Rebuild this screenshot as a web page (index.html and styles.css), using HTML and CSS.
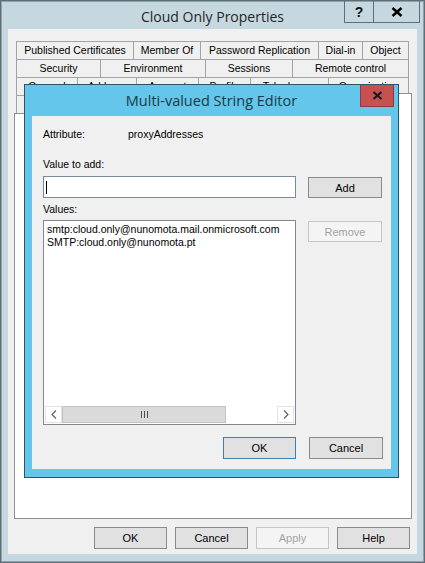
FILE: index.html
```html
<!DOCTYPE html>
<html>
<head>
<meta charset="utf-8">
<title>Cloud Only Properties</title>
<link rel="stylesheet" href="styles.css">
</head>
<body>
<div class="window">
  <div class="titlebar">
    <div class="title">Cloud Only Properties</div>
    <div class="caption-btns">
      <div class="cbtn help">?</div>
      <div class="cbtn close">
        <svg width="12" height="10" viewBox="0 0 12 10"><path d="M1.5 1 L10.5 9 M10.5 1 L1.5 9" stroke="#000" stroke-width="2.4" fill="none"/></svg>
      </div>
    </div>
  </div>
  <div class="client">
    <div class="tabs">
      <div class="tabrow r1">
        <div class="tab">Published Certificates</div>
        <div class="tab">Member Of</div>
        <div class="tab">Password Replication</div>
        <div class="tab">Dial-in</div>
        <div class="tab last">Object</div>
      </div>
      <div class="tabrow r2">
        <div class="tab">Security</div>
        <div class="tab">Environment</div>
        <div class="tab">Sessions</div>
        <div class="tab last">Remote control</div>
      </div>
      <div class="tabrow r3">
        <div class="tab">General</div>
        <div class="tab">Address</div>
        <div class="tab">Account</div>
        <div class="tab">Profile</div>
        <div class="tab">Telephones</div>
        <div class="tab last">Organization</div>
      </div>
      <div class="tabrow r4">
        <div class="tab">COM+</div>
        <div class="tab last sel">Attribute Editor</div>
      </div>
    </div>
    <div class="panel"></div>
    <div class="buttons">
      <div class="btn">OK</div>
      <div class="btn">Cancel</div>
      <div class="btn disabled">Apply</div>
      <div class="btn">Help</div>
    </div>
  </div>

  <div class="dialog">
    <div class="dlg-titlebar">
      <div class="dlg-title">Multi-valued String Editor</div>
      <div class="dlg-close">
        <svg width="11" height="9" viewBox="0 0 11 9"><path d="M1.5 1 L9.5 8 M9.5 1 L1.5 8" stroke="#1a1a1a" stroke-width="2.2" fill="none"/></svg>
      </div>
    </div>
    <div class="dlg-client">
      <div class="attr-row"><span class="attr-label">Attribute:</span><span>proxyAddresses</span></div>
      <div class="label l-value">Value to add:</div>
      <div class="field-row">
        <div class="textbox"><span class="caret"></span></div>
        <div class="btn add">Add</div>
      </div>
      <div class="label l-values">Values:</div>
      <div class="field-row list-row">
        <div class="listbox">
          <div class="items">
            <div class="item">smtp:cloud.only@nunomota.mail.onmicrosoft.com</div>
            <div class="item">SMTP:cloud.only@nunomota.pt</div>
          </div>
          <div class="hscroll">
            <div class="sb-arrow">
              <svg width="6" height="9" viewBox="0 0 6 9"><path d="M5 0.5 L1 4.5 L5 8.5" stroke="#606060" stroke-width="1.2" fill="none"/></svg>
            </div>
            <div class="sb-thumb"><span class="grip"></span><span class="grip"></span><span class="grip"></span></div>
            <div class="sb-track"></div>
            <div class="sb-arrow">
              <svg width="6" height="9" viewBox="0 0 6 9"><path d="M1 0.5 L5 4.5 L1 8.5" stroke="#606060" stroke-width="1.2" fill="none"/></svg>
            </div>
          </div>
        </div>
        <div class="btn disabled remove">Remove</div>
      </div>
      <div class="dlg-footer">
        <div class="btn default ok">OK</div>
        <div class="btn cancel">Cancel</div>
      </div>
    </div>
  </div>
</div>
</body>
</html>
```
FILE: styles.css
```css
* { box-sizing: border-box; }
html, body { margin: 0; padding: 0; }
body {
  font-family: "Liberation Sans", Arial, sans-serif;
  font-size: 10.5px;
  color: #000;
  background: #c5d8df;
}

.window {
  position: relative;
  width: 425px;
  height: 563px;
  border: 1px solid #5f6e77;
  box-shadow: inset 0 0 0 1px #8fa2ab;
  background: #c5d8df;
  display: flex;
  flex-direction: column;
}

.titlebar {
  height: 28px;
  flex: none;
  display: grid;
  grid-template-columns: 1fr auto 1fr;
}
.title {
  grid-column: 2;
  align-self: center;
  padding-top: 2px;
  font-family: "Open Sans", "Noto Sans", sans-serif;
  font-size: 14px;
  color: #262626;
  white-space: nowrap;
}
.caption-btns {
  grid-column: 3;
  justify-self: end;
  align-self: start;
  display: flex;
  height: 22px;
  margin-right: 4px;
}
.cbtn {
  height: 22px;
  border-left: 1px solid #5f6e77;
  border-bottom: 1px solid #5f6e77;
  display: flex;
  align-items: center;
  justify-content: center;
}
.cbtn.help {
  width: 29px;
  font-family: "Liberation Sans", Arial, sans-serif;
  font-weight: bold;
  font-size: 14px;
  color: #111;
}
.cbtn.close {
  width: 47px;
  border-right: 1px solid #5f6e77;
}

.client {
  flex: none;
  height: 525px;
  margin: 0 7px;
  background: #f0f0f0;
  padding: 12px 5px 0 6px;
  display: flex;
  flex-direction: column;
}

.tabs {
  margin: 0 3px 0 2px;
  flex: none;
}
.tabrow {
  display: grid;
  height: 18px;
}
.r1 { grid-template-columns: 117px 67px 118px 44px 1fr; }
.r2 { grid-template-columns: 84px 105px 87px 1fr; }
.r3 { grid-template-columns: 61px 59px 62px 52px 78px 1fr; }
.r4 { grid-template-columns: 184px 1fr; }
.tab {
  border-left: 1px solid #a3a3a3;
  border-top: 1px solid #a3a3a3;
  background: #f0f0f0;
  text-align: center;
  line-height: 17px;
  white-space: nowrap;
  overflow: hidden;
}
.tab.last { border-right: 1px solid #a3a3a3; }
.tab.sel {
  background: #fff;
  margin: -2px -3px -1px -2px;
  border-color: #8e8f8f;
  position: relative;
  z-index: 1;
}

.panel {
  flex: 1;
  background: #fff;
  border: 1px solid #8e8f8f;
}

.buttons {
  flex: none;
  display: flex;
  justify-content: flex-end;
  gap: 8px;
  margin: 8px 2px 5px 0;
}
.btn {
  width: 73px;
  height: 22px;
  background: #e1e1e1;
  border: 1px solid #8a8a8a;
  display: flex;
  align-items: center;
  justify-content: center;
  font-size: 11px;
  color: #000;
}
.btn.disabled {
  background: #f4f4f4;
  border-color: #c6c6c6;
  color: #a3a3a3;
}
.btn.default {
  border-color: #3c7fb1;
}

/* ---------- dialog ---------- */
.dialog {
  position: absolute;
  left: 23px;
  top: 83px;
  width: 375px;
  height: 394px;
  border: 1px solid #2f5466;
  background: #63c6ea;
  padding: 0 7px 8px 7px;
  display: flex;
  flex-direction: column;
  z-index: 5;
}
.dlg-titlebar {
  height: 31px;
  flex: none;
  margin: 0 -7px;
  display: grid;
  grid-template-columns: 1fr auto 1fr;
}
.dlg-title {
  grid-column: 2;
  align-self: center;
  font-family: "Open Sans", "Noto Sans", sans-serif;
  font-size: 14.5px;
  color: #1d3a45;
  white-space: nowrap;
}
.dlg-close {
  grid-column: 3;
  justify-self: end;
  align-self: start;
  width: 34px;
  height: 22px;
  margin-right: 4px;
  background: #c75050;
  border: 1px solid #8c3a3a;
  border-top: none;
  display: flex;
  align-items: center;
  justify-content: center;
}
.dlg-client {
  flex: 1;
  background: #f0f0f0;
  padding: 12px 0 0 11px;
  display: flex;
  flex-direction: column;
}
.attr-row {
  height: 13px;
  line-height: 13px;
  display: flex;
}
.attr-label { width: 85px; }
.label {
  height: 13px;
  line-height: 13px;
}
.l-value { margin-top: 17px; }
.l-values { margin-top: 5px; }
.field-row {
  display: grid;
  grid-template-columns: 253px 74px;
  column-gap: 12px;
  align-items: start;
  margin-top: 5px;
}
.list-row { margin-top: 4px; }
.textbox {
  height: 22px;
  background: #fff;
  border: 1px solid #7a8a9c;
  padding: 4px 0 0 2px;
}
.caret {
  display: block;
  width: 1px;
  height: 13px;
  background: #000;
}
.btn.add { margin-top: 1px; width: 74px; height: 21px; }
.btn.remove { margin-top: 1px; width: 74px; height: 21px; }

.listbox {
  height: 205px;
  background: #fff;
  border: 1px solid #828790;
  padding: 1px;
  display: flex;
  flex-direction: column;
}
.items {
  flex: 1;
  padding: 1px 0 0 2px;
}
.item {
  height: 13px;
  line-height: 13px;
  white-space: nowrap;
}
.hscroll {
  height: 17px;
  display: flex;
  background: #fff;
}
.sb-arrow {
  width: 17px;
  height: 17px;
  border: 1px solid #e3e3e3;
  display: flex;
  align-items: center;
  justify-content: center;
  background: #fff;
}
.sb-thumb {
  width: 164px;
  height: 17px;
  background: #dadada;
  border: 1px solid #c2c2c2;
  display: flex;
  align-items: center;
  justify-content: center;
  gap: 2px;
}
.grip {
  width: 1px;
  height: 7px;
  background: #505050;
}
.sb-track {
  flex: 1;
  background: #fff;
}

.dlg-footer {
  display: flex;
  justify-content: flex-end;
  gap: 13px;
  margin-top: 12px;
  padding-right: 8px;
}
.btn.cancel { width: 74px; }
```
